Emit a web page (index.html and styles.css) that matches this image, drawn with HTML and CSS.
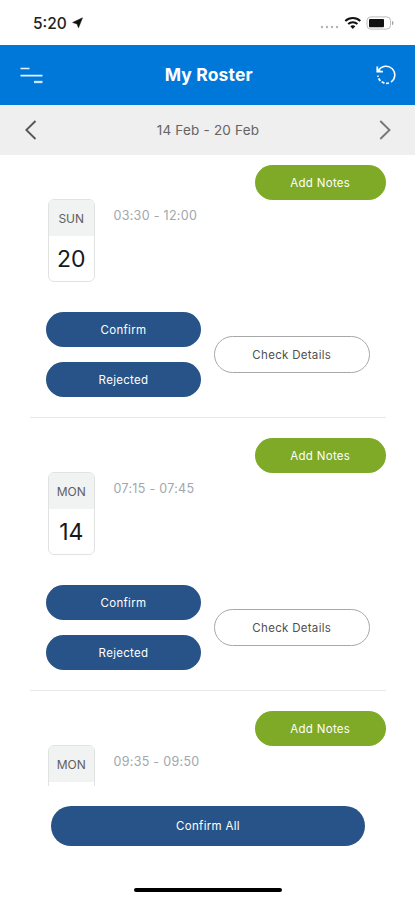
FILE: index.html
```html
<!DOCTYPE html>
<html lang="en">
<head>
<meta charset="utf-8">
<title>My Roster</title>
<link rel="stylesheet" href="styles.css">
</head>
<body>
<div class="status">
  <span class="clock">5:20</span>
  <svg class="location" width="11" height="12" viewBox="0 0 11 12"><path d="M10.500 .8 6.500 10.800 5 6.900.6 5.500Z" fill="#111" stroke="#111" stroke-width=".5"/></svg>
  <svg class="signals" width="76" height="16" viewBox="0 0 76 16">
    <g fill="#b4b4b4"><circle cx="3" cy="12" r="1.2"/><circle cx="8" cy="12" r="1.2"/><circle cx="13" cy="12" r="1.2"/><circle cx="18" cy="12" r="1.2"/></g>
    <g fill="none" stroke="#111" stroke-width="2"><path d="M26.300 6c4.200-4 10.800-4 15 0"/><path d="M29.200 9c2.600-2.500 6.600-2.500 9.200 0"/></g>
    <path d="M31.300 11.200c1.400-1.300 3.600-1.300 5 0L33.800 13.900Z" fill="#111"/>
    <rect x="48" y="1.900" width="23.500" height="12.200" rx="3.800" fill="#fff" stroke="#bcbcbc"/>
    <rect x="50" y="3.900" width="15" height="8.300" rx="1" fill="#111"/>
    <path d="M73 6v4.200c2-.7 2-3.500 0-4.200Z" fill="#a5a5a5"/>
  </svg>
</div>
<header class="header">
  <svg width="24" height="20" viewBox="0 0 24 20" fill="none" stroke="#e4f1fd" stroke-width="1.600"><path d="M.5 3.500h9M.5 10.600h22"/><path d="M14 17h8.500" stroke-width="2.300" stroke="#cfe5fa"/></svg>
  <h1>My Roster</h1>
  <svg width="22" height="22" viewBox="0 0 22 22" fill="none" stroke="#fff" stroke-width="1.500">
    <path d="M4.800 6.200A8.700 8.700 0 1 1 17 18.100"/><path d="M15 19A8.700 8.700 0 0 1 3.900 11.700" stroke-width="1.800" stroke-dasharray="3 1.600"/><path d="M3.300 2.400v5.200h5.600" stroke-width="1.800"/><path d="M3.300 4v3.600h4Z" fill="#fff" stroke="none"/>
  </svg>
</header>
<nav class="week">
  <svg width="12" height="20" viewBox="0 0 12 20" fill="none" stroke="#555" stroke-width="1.900"><path d="M10.500 1 1.300 10l9.200 9"/></svg>
  <span class="range">14 Feb - 20 Feb</span>
  <svg width="12" height="20" viewBox="0 0 12 20" fill="none" stroke="#777" stroke-width="1.900"><path d="m1.300 1 9.200 9-9.200 9"/></svg>
</nav>
<main class="list">
  <section class="shift">
    <button class="btn notes">Add Notes</button>
    <div class="info"><div class="date"><span class="day">SUN</span><span class="num">20</span></div><span class="time">03:30 - 12:00</span></div>
    <div class="actions"><div class="answers"><button class="btn">Confirm</button><button class="btn">Rejected</button></div><button class="btn details">Check Details</button></div>
  </section>
  <section class="shift">
    <button class="btn notes">Add Notes</button>
    <div class="info"><div class="date"><span class="day">MON</span><span class="num">14</span></div><span class="time">07:15 - 07:45</span></div>
    <div class="actions"><div class="answers"><button class="btn">Confirm</button><button class="btn">Rejected</button></div><button class="btn details">Check Details</button></div>
  </section>
  <section class="shift">
    <button class="btn notes">Add Notes</button>
    <div class="info"><div class="date"><span class="day">MON</span><span class="num"></span></div><span class="time">09:35 - 09:50</span></div>
  </section>
</main>
<footer class="footer">
  <button class="btn all">Confirm All</button>
  <div class="home"></div>
</footer>
</body>
</html>
```
FILE: styles.css
```css
* { box-sizing: border-box; }
body {
  margin: 0;
  height: 900px;
  overflow: hidden;
  display: flex;
  flex-direction: column;
  background: #fff;
  font-family: Inter, "Liberation Sans", sans-serif;
}
svg { display: block; flex: none; }
.status {
  height: 44.5px;
  flex: none;
  display: flex;
  align-items: center;
  padding: 2px 20px 0 33px;
}
.clock { font-size: 15.5px; font-weight: 500; color: #222; white-space: nowrap; }
.location { margin-left: 5px; }
.signals { margin-left: auto; }
.header {
  height: 60px;
  flex: none;
  display: flex;
  align-items: center;
  justify-content: space-between;
  padding: 0 19.5px 0 20px;
  background: #0078da;
  color: #fff;
}
.header h1 { margin: 0; font-size: 17.5px; font-weight: 700; letter-spacing: 0.15px; }
.week {
  height: 50.5px;
  flex: none;
  display: flex;
  align-items: center;
  justify-content: space-between;
  padding: 0 23.5px 0 24.5px;
  background: #efefef;
  color: #646464;
}
.range { font-size: 13.5px; letter-spacing: 0.2px; }
.list {
  height: 630.5px;
  flex: none;
  overflow: hidden;
  padding: 0 29.5px 0 30px;
}
.shift {
  height: 273px;
  display: flex;
  flex-direction: column;
  padding-top: 20px;
  border-bottom: 1.5px solid #e8e8e8;
}
.shift:first-child { height: 263.4px; padding-top: 10.4px; }
.btn {
  display: block;
  height: 35px;
  width: 155px;
  padding: 1px 0 0;
  border: 0;
  border-radius: 20px;
  background: #285388;
  color: #fff;
  font: 400 11.5px/34px Inter, "Liberation Sans", sans-serif;
  letter-spacing: 0.3px;
  flex: none;
}
.notes { width: 130.5px; align-self: flex-end; background: #7eaa28; }
.info { display: flex; margin: -1px 0 0 17.5px; flex: none; }
.date {
  width: 47.5px;
  height: 83px;
  border: 1.5px solid #e1e3e3;
  border-radius: 6px;
  overflow: hidden;
  text-align: center;
}
.day { display: block; height: 36px; background: #f1f2f2; color: #5f5f5f; font-size: 12px; line-height: 37px; }
.num { display: block; color: #181818; font-size: 23px; line-height: 46px; }
.time { margin: 8px 0 0 18.5px; color: #a0a7ad; font-size: 12.5px; line-height: 18px; letter-spacing: 0.3px; }
.actions { display: flex; align-items: center; margin: 30px 0 0 16px; gap: 12.5px; flex: none; }
.answers { display: flex; flex-direction: column; gap: 15px; }
.details { height: 37px; width: 156.5px; background: #fff; border: 1px solid #a8a8a8; color: #505050; }
.footer { flex: 1; padding: 20px 50px 0 51px; }
.all { width: 314px; height: 40px; }
.home { width: 148px; height: 4px; margin: 42px 0 0 83px; border-radius: 2px; background: #000; }
```
